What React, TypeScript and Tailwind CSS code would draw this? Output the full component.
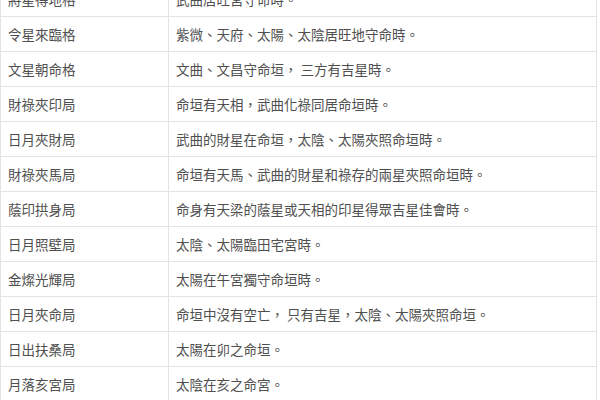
import React from "react";

const rows: [string, string][] = [
  ["將星得地格", "武曲居旺宮守命時。"],
  ["令星來臨格", "紫微、天府、太陽、太陰居旺地守命時。"],
  ["文星朝命格", "文曲、文昌守命垣， 三方有吉星時。"],
  ["財祿夾印局", "命垣有天相，武曲化祿同居命垣時。"],
  ["日月夾財局", "武曲的財星在命垣，太陰、太陽夾照命垣時。"],
  ["財祿夾馬局", "命垣有天馬、武曲的財星和祿存的兩星夾照命垣時。"],
  ["蔭印拱身局", "命身有天梁的蔭星或天相的印星得眾吉星佳會時。"],
  ["日月照壁局", "太陰、太陽臨田宅宮時。"],
  ["金燦光輝局", "太陽在午宮獨守命垣時。"],
  ["日月夾命局", "命垣中沒有空亡， 只有吉星，太陰、太陽夾照命垣。"],
  ["日出扶桑局", "太陽在卯之命垣。"],
  ["月落亥宮局", "太陰在亥之命宮。"],
];

const App: React.FC = () => {
  return (
    <div className="w-[600px] h-[400px] overflow-hidden bg-white">
      {/* first row is cut by the top edge, as in the screenshot */}
      <div
        className="-mt-[18px] w-[597px] border-l border-r border-[#e3e3e3] text-[13.5px] text-[#4f4f4f]"
        style={{ fontFamily: '"Noto Sans CJK TC", "Noto Sans CJK SC", sans-serif' }}
      >
        {rows.map(([name, desc]) => (
          <div
            key={name}
            className="grid grid-cols-[168px_1fr] h-[35px] border-b border-[#e3e3e3]"
          >
            <div className="flex items-center pl-[7px] border-r border-[#e3e3e3]">
              {name}
            </div>
            <div className="flex items-center pl-[7px]">{desc}</div>
          </div>
        ))}
      </div>
    </div>
  );
};

export default App;
